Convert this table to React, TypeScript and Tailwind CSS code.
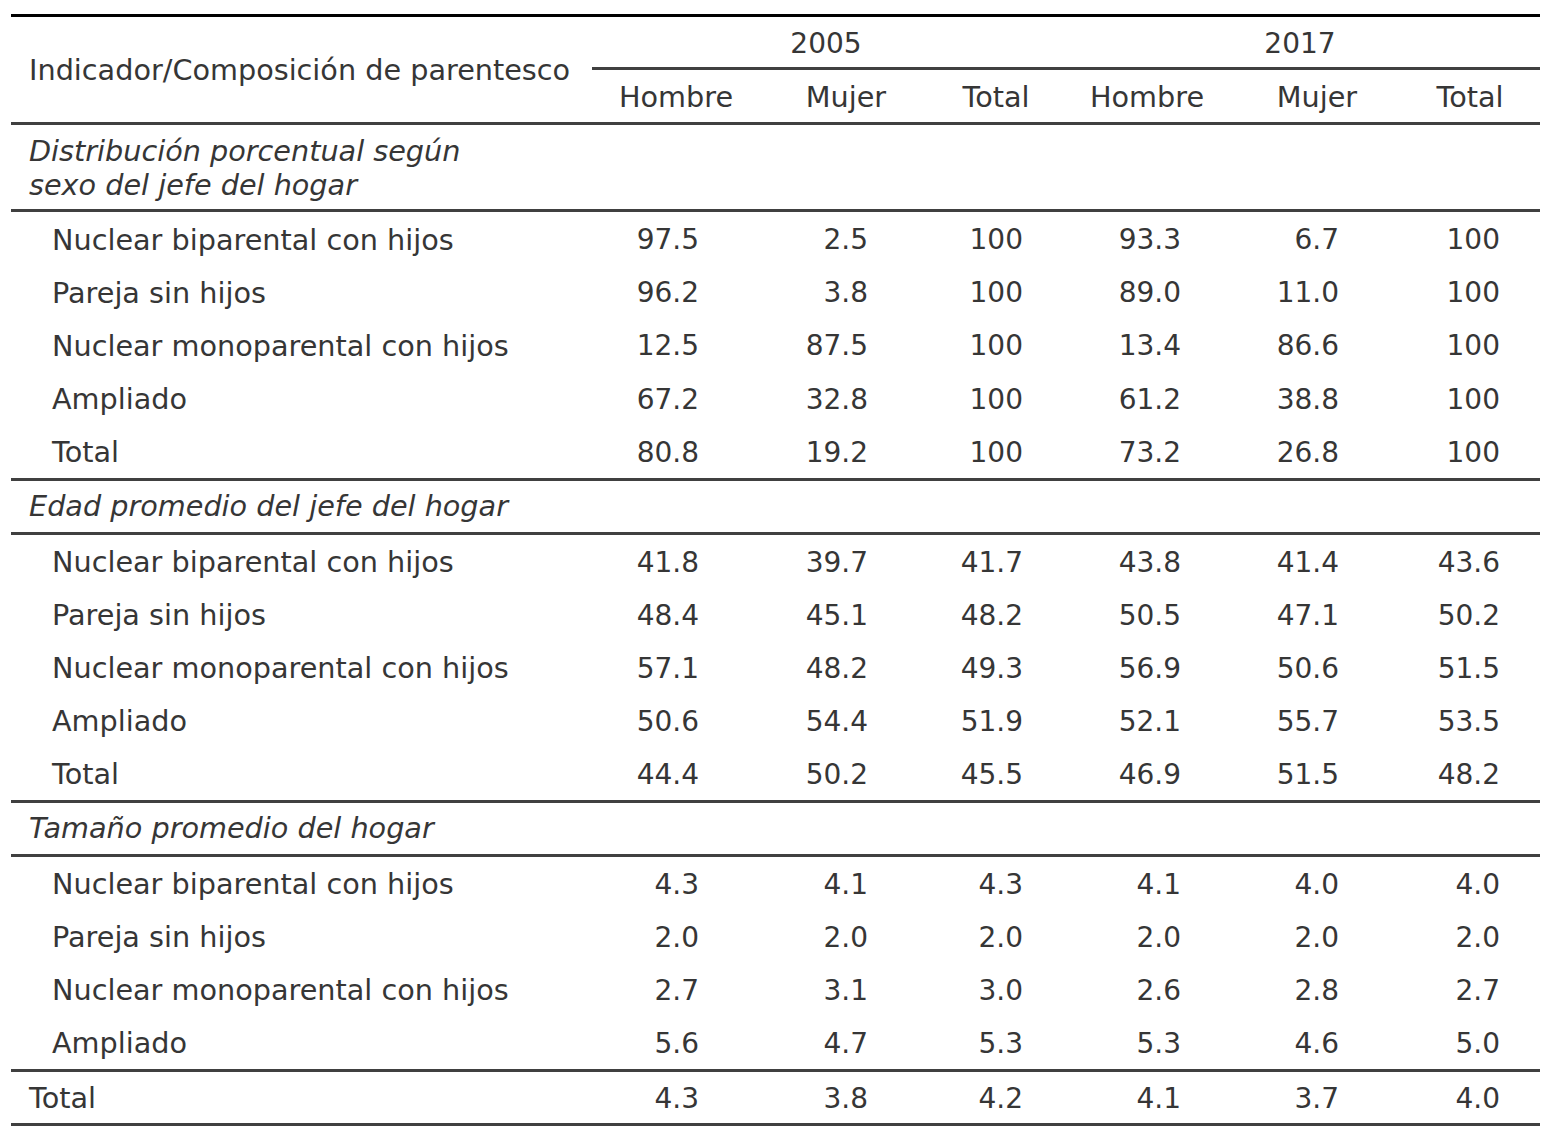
import type React from "react";

const grid =
	"grid grid-cols-[581px_168px_172px_128px_174px_166px_140px]";

// right padding of the number in each data column
const numPad = [
	"pr-[61px]",
	"pr-[64px]",
	"pr-[37px]",
	"pr-[53px]",
	"pr-[61px]",
	"pr-[40px]",
];

interface Section {
	title: React.ReactNode;
	titleClass: string;
	rowClass: string;
	rows: [string, string[]][];
}

const sections: Section[] = [
	{
		title: (
			<>
				Distribución porcentual según
				<br />
				sexo del jefe del hogar
			</>
		),
		titleClass: "pt-[9px] pb-[7px] leading-[34px]",
		rowClass: "h-[53.2px]",
		rows: [
			["Nuclear biparental con hijos", ["97.5", "2.5", "100", "93.3", "6.7", "100"]],
			["Pareja sin hijos", ["96.2", "3.8", "100", "89.0", "11.0", "100"]],
			["Nuclear monoparental con hijos", ["12.5", "87.5", "100", "13.4", "86.6", "100"]],
			["Ampliado", ["67.2", "32.8", "100", "61.2", "38.8", "100"]],
			["Total", ["80.8", "19.2", "100", "73.2", "26.8", "100"]],
		],
	},
	{
		title: "Edad promedio del jefe del hogar",
		titleClass: "h-[54px] flex items-center",
		rowClass: "h-[53px]",
		rows: [
			["Nuclear biparental con hijos", ["41.8", "39.7", "41.7", "43.8", "41.4", "43.6"]],
			["Pareja sin hijos", ["48.4", "45.1", "48.2", "50.5", "47.1", "50.2"]],
			["Nuclear monoparental con hijos", ["57.1", "48.2", "49.3", "56.9", "50.6", "51.5"]],
			["Ampliado", ["50.6", "54.4", "51.9", "52.1", "55.7", "53.5"]],
			["Total", ["44.4", "50.2", "45.5", "46.9", "51.5", "48.2"]],
		],
	},
	{
		title: "Tamaño promedio del hogar",
		titleClass: "h-[54px] flex items-center",
		rowClass: "h-[53px]",
		rows: [
			["Nuclear biparental con hijos", ["4.3", "4.1", "4.3", "4.1", "4.0", "4.0"]],
			["Pareja sin hijos", ["2.0", "2.0", "2.0", "2.0", "2.0", "2.0"]],
			["Nuclear monoparental con hijos", ["2.7", "3.1", "3.0", "2.6", "2.8", "2.7"]],
			["Ampliado", ["5.6", "4.7", "5.3", "5.3", "4.6", "5.0"]],
		],
	},
];

const DataRow: React.FC<{ label: string; values: string[]; className: string; indent?: boolean }> = ({
	label,
	values,
	className,
	indent = true,
}) => (
	<div className={`${grid} ${className} items-center pt-[3px]`}>
		<div className={`text-[28.7px] ${indent ? "pl-[41px]" : "pl-[18px]"}`}>{label}</div>
		{values.map((v, i) => (
			<div key={i} className={`text-right ${numPad[i]}`}>
				{v}
			</div>
		))}
	</div>
);

export default function App() {
	return (
		<div className="min-h-[1144px] w-[1552px] bg-white pt-[14px] pl-[11px] text-[28px] text-[#363636] [font-family:'DejaVu_Sans',Verdana,sans-serif]">
			<div className="w-[1529px] border-t-[3px] border-black">
				{/* header */}
				<div className={`${grid} grid-rows-[53px_52px] border-b-[3px] border-[#404040] text-[28.7px]`}>
					<div className="row-span-2 flex items-center pl-[18px] pt-[2px]">Indicador/Composición de parentesco</div>
					<div className="col-span-3 flex items-center justify-center border-b-[3px] border-[#404040] pt-[4px] text-[28px]">
						2005
					</div>
					<div className="col-span-3 flex items-center justify-center border-b-[3px] border-[#404040] pt-[4px] text-[28px]">
						2017
					</div>
					{["Hombre", "Mujer", "Total", "Hombre", "Mujer", "Total"].map((h, i) => (
						<div key={i} className="flex items-center justify-center pt-[4px]">
							{h}
						</div>
					))}
				</div>

				{sections.map((s, si) => (
					<div key={si} className="border-b-[3px] border-[#404040]">
						<div className={`pl-[18px] text-[28.7px] italic border-b-[3px] border-[#404040] ${s.titleClass}`}>
							{s.title}
						</div>
						{s.rows.map(([label, values]) => (
							<DataRow key={label} label={label} values={values} className={s.rowClass} />
						))}
					</div>
				))}

				<div className="border-b-[3px] border-[#404040]">
					<DataRow label="Total" values={["4.3", "3.8", "4.2", "4.1", "3.7", "4.0"]} className="h-[51px]" indent={false} />
				</div>
			</div>
		</div>
	);
}
